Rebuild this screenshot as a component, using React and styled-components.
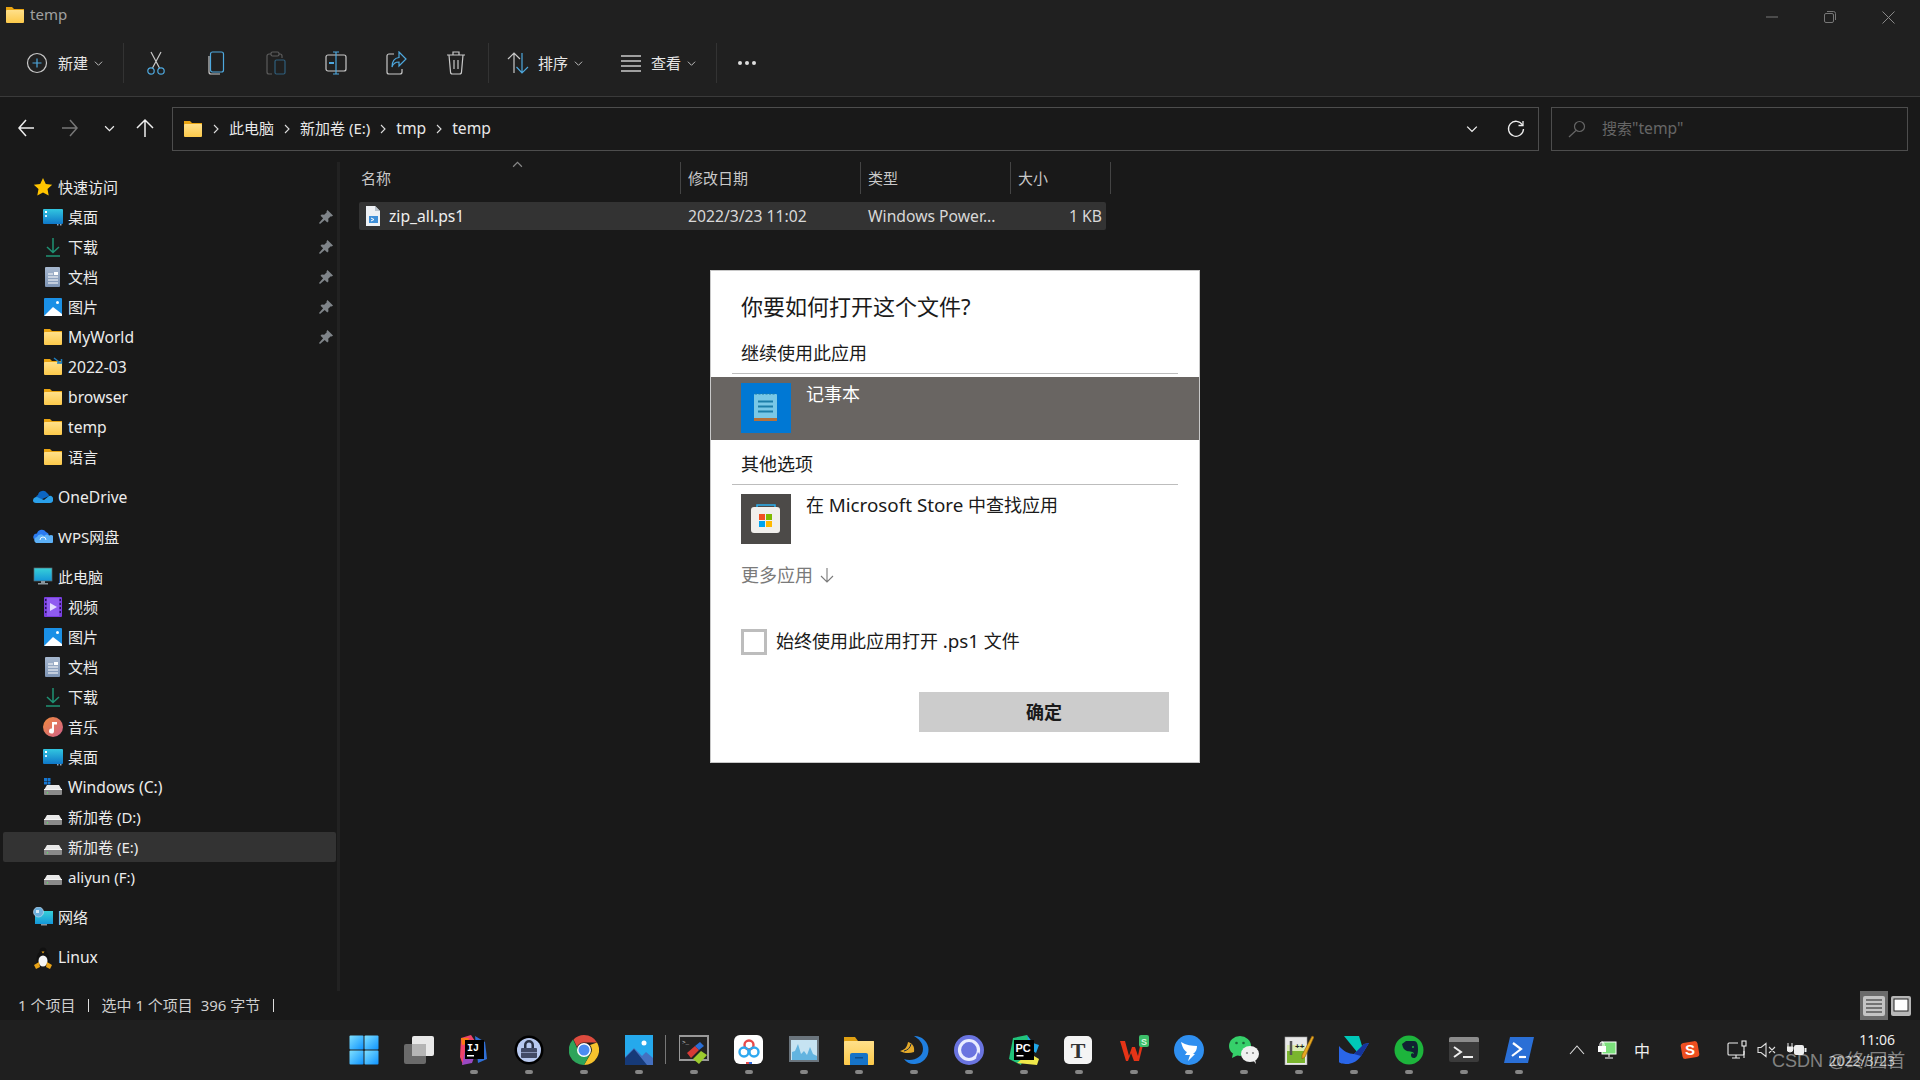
import styled, { createGlobalStyle } from 'styled-components';

const GlobalStyle = createGlobalStyle`
	html, body {
		margin: 0;
		padding: 0;
		background: #191919;
	}
	* {
		box-sizing: border-box;
	}
	body {
		font-family: 'Noto Sans', 'Noto Sans CJK SC', sans-serif;
		overflow: hidden;
	}
`;

/* ---------- small glyphs ---------- */

const Chevron = ({ size = 10, color = '#bbb', up }) => (
	<svg width={size} height={size} viewBox='0 0 10 10' fill='none' stroke={color} strokeWidth='1.1'>
		<path d={up ? 'M1 7l4-4 4 4' : 'M1 3l4 4 4-4'} />
	</svg>
);

const CrumbArrow = () => (
	<svg width='6' height='10' viewBox='0 0 6 10' fill='none' stroke='#ddd' strokeWidth='1.1'>
		<path d='M1 1l4 4-4 4' />
	</svg>
);

const Folder = ({ size = 20 }) => (
	<svg width={size} height={size} viewBox='0 0 20 20'>
		<path d='M1 2h6l2 2h10v3H1z' fill='#e9a412' />
		<rect x='1' y='5' width='18' height='13' rx='1' fill='url(#folderFill)' />
	</svg>
);

/* ---------- toolbar icons ---------- */

const BLUE = '#4ea8de';
const GREY = '#c9c9c9';

const NewIcon = () => (
	<svg width='22' height='22' viewBox='0 0 22 22' fill='none'>
		<circle cx='11' cy='11' r='9.5' stroke={GREY} strokeWidth='1.2' />
		<path d='M11 6.5v9M6.5 11h9' stroke={BLUE} strokeWidth='1.2' />
	</svg>
);
const CutIcon = () => (
	<svg width='22' height='24' viewBox='0 0 22 24' fill='none' strokeWidth='1.2'>
		<path d='M6 1l8.5 16M16 1L7.5 17' stroke={GREY} />
		<circle cx='6' cy='20' r='3.2' stroke={BLUE} />
		<circle cx='16' cy='20' r='3.2' stroke={BLUE} />
	</svg>
);
const CopyIcon = () => (
	<svg width='18' height='24' viewBox='0 0 18 24' fill='none' strokeWidth='1.2'>
		<path d='M2 5v16a2 2 0 0 0 2 2h9' stroke={GREY} />
		<rect x='3.5' y='1' width='13' height='20' rx='2' stroke={BLUE} />
	</svg>
);
const PasteIcon = () => (
	<svg width='20' height='24' viewBox='0 0 20 24' fill='none' strokeWidth='1.2'>
		<path d='M5 3H3a2 2 0 0 0-2 2v16a2 2 0 0 0 2 2h3M13 3h1a2 2 0 0 1 2 2v2' stroke='#5c5c5c' />
		<rect x='5' y='1' width='8' height='4' rx='1.5' stroke='#5c5c5c' />
		<rect x='9' y='9' width='10' height='14' rx='1.5' stroke='#2f5f7d' />
	</svg>
);
const RenameIcon = () => (
	<svg width='22' height='24' viewBox='0 0 22 24' fill='none' strokeWidth='1.2'>
		<rect x='1' y='4' width='20' height='16' rx='2' stroke={GREY} />
		<path d='M11 1v22M8 1h6M8 23h6' stroke={BLUE} />
		<path d='M4 12h5' stroke={BLUE} strokeWidth='2' />
	</svg>
);
const ShareIcon = () => (
	<svg width='22' height='24' viewBox='0 0 22 24' fill='none' strokeWidth='1.2'>
		<path d='M9 3H4a2 2 0 0 0-2 2v16a2 2 0 0 0 2 2h11a2 2 0 0 0 2-2v-3' stroke={GREY} />
		<path d='M14 1l7 7-7 7v-4c-4 0-6 2-7 5 0-6 3-9 7-9.500z' stroke={BLUE} />
	</svg>
);
const TrashIcon = () => (
	<svg width='20' height='24' viewBox='0 0 20 24' fill='none' stroke={GREY} strokeWidth='1.2'>
		<path d='M1 4h18M7 4V1h6v3M3 4l1.500 17a2 2 0 0 0 2 2h7a2 2 0 0 0 2-2L17 4M8 9v9M12 9v9' />
	</svg>
);
const SortIcon = () => (
	<svg width='22' height='24' viewBox='0 0 22 24' fill='none' strokeWidth='1.2'>
		<path d='M7 22V2M1 8l6-6 6 6' stroke={GREY} />
		<path d='M15 2v20M9.500 16l5.500 6 6-6' stroke={BLUE} />
	</svg>
);
const ViewIcon = () => (
	<svg width='20' height='20' viewBox='0 0 20 20' stroke={GREY} strokeWidth='1.3'>
		<path d='M0 3h20M0 8h20M0 13h20M0 18h20' />
	</svg>
);
const MoreIcon = () => (
	<svg width='20' height='6' viewBox='0 0 20 6' fill='#ddd'>
		<circle cx='3' cy='3' r='2' />
		<circle cx='10' cy='3' r='2' />
		<circle cx='17' cy='3' r='2' />
	</svg>
);
const NavArrow = ({ dir = 'left', color = '#eee' }) => {
	const d = {
		left: 'M17 10H2M9 2l-7 8 7 8',
		right: 'M1 10h15M9 2l7 8-7 8',
		up: 'M10 19V2M2 10l8-8 8 8',
	}[dir];
	return (
		<svg width='20' height='20' viewBox='0 0 20 20' fill='none' stroke={color} strokeWidth='1.5'>
			<path d={d} />
		</svg>
	);
};

/* ---------- sidebar icons ---------- */

const StarIcon = () => (
	<svg width='20' height='20' viewBox='0 0 20 20'>
		<path d='M10 1l2.800 5.900 6.400.8-4.700 4.400 1.200 6.400L10 15.400l-5.700 3.100 1.200-6.400L.8 7.700l6.400-.8z' fill='#ffc400' />
	</svg>
);
const DesktopIcon = () => (
	<svg width='20' height='20' viewBox='0 0 20 20'>
		<rect y='2' width='20' height='15' rx='1' fill='url(#deskFill)' />
		<rect x='2' y='4' width='2' height='2' fill='#fff' />
		<rect x='2' y='8' width='2' height='2' fill='#cfefff' />
		<rect x='14' y='17' width='1.500' height='1.500' fill='#9ab' />
		<rect x='17' y='17' width='1.500' height='1.500' fill='#9ab' />
	</svg>
);
const DownloadIcon = () => (
	<svg width='20' height='20' viewBox='0 0 20 20' fill='none' stroke='#1f9274' strokeWidth='1.5'>
		<path d='M10 1v14M4 10l6 5.500 6-5.500M3 19h14' />
	</svg>
);
const DocIcon = () => (
	<svg width='20' height='20' viewBox='0 0 20 20'>
		<rect x='2' width='15' height='20' rx='1' fill='url(#docFill)' />
		<path d='M5 7h5M5 10h10M5 13h10M5 16h10' stroke='#fff' strokeWidth='1' />
		<rect x='11' y='5' width='4' height='3' fill='#fff' />
	</svg>
);
const PictureIcon = () => (
	<svg width='20' height='20' viewBox='0 0 20 20'>
		<rect x='1' y='1' width='18' height='18' rx='1' fill='#1a90e6' />
		<path d='M1 19l9-9 9 7v2z' fill='#fff' />
		<circle cx='14.500' cy='5.500' r='1.500' fill='#fff' />
	</svg>
);
const ShortcutFolder = () => (
	<svg width='20' height='20' viewBox='0 0 20 20'>
		<path d='M1 2h6l2 2h10v3H1z' fill='#e9a412' />
		<rect x='1' y='5' width='18' height='13' rx='1' fill='url(#folderFill)' />
		<path d='M11 1l7 5.500M14 6h4.500V2' stroke='#1f7fc1' strokeWidth='1.500' fill='none' />
	</svg>
);
const OneDriveIcon = () => (
	<svg width='20' height='20' viewBox='0 0 20 20'>
		<path d='M5 8a5 5 0 0 1 9-2 4 4 0 0 1 2 3L7 13 3 10a3 3 0 0 1 2-2z' fill='#0c66c2' />
		<path d='M0 13.500A3.500 3.500 0 0 1 6 11l5 2 5-4a3.500 3.500 0 0 1 4 5c-.5 1-1.500 2-3 2H3c-2 0-3-1-3-2.500z' fill='#2aa0ea' />
	</svg>
);
const WpsCloudIcon = () => (
	<svg width='20' height='20' viewBox='0 0 20 20'>
		<path d='M2 13a3.500 3.500 0 0 1 2-6.500 5 5 0 0 1 9-1.500 4 4 0 0 1 3 3.500L6 15z' fill='#2b7bf0' />
		<path d='M3 16a3.200 3.200 0 0 1 1-6 4 4 0 0 1 7-1 3.500 3.500 0 0 1 5-.5 3.800 3.800 0 0 1 3 7.500H3z' fill='#5cb0f6' />
		<path d='M7 13a3 3 0 0 1 6 0' stroke='#e8f4ff' fill='none' />
	</svg>
);
const PcIcon = () => (
	<svg width='20' height='20' viewBox='0 0 20 20'>
		<rect x='1' y='1' width='18' height='13' fill='url(#pcFill)' stroke='#5a6a72' strokeWidth='.7' />
		<path d='M8 14h4v2H8zM5 16h10v1.500H5z' fill='#8a959c' />
	</svg>
);
const VideoIcon = () => (
	<svg width='20' height='20' viewBox='0 0 20 20'>
		<rect x='1' y='0' width='18' height='20' rx='1' fill='#7a3fe0' />
		<rect x='4' y='1' width='12' height='18' fill='#8f5bf0' />
		<path d='M2 2h1.500v2H2zM2 6h1.500v2H2zM2 10h1.500v2H2zM2 14h1.500v2H2zM16.500 2H18v2h-1.500zM16.500 6H18v2h-1.500zM16.500 10H18v2h-1.500zM16.500 14H18v2h-1.500z' fill='#2a1360' />
		<path d='M7 6l7 4-7 4z' fill='#e4dcff' />
	</svg>
);
const MusicIcon = () => (
	<svg width='20' height='20' viewBox='0 0 20 20'>
		<circle cx='10' cy='10' r='10' fill='url(#musicFill)' />
		<path d='M9 5h5v2.500h-3v6.500a2.500 2.500 0 1 1-2-2.400z' fill='#fff' />
	</svg>
);
const DriveIcon = ({ windows }) => (
	<svg width='20' height='20' viewBox='0 0 20 20'>
		<path d='M1 13l3-5h12l3 5z' fill='#e8e8e8' />
		<rect x='1' y='12' width='18' height='6' rx='1' fill='#8a8a8a' />
		<rect x='1' y='12' width='18' height='1' fill='#f4f4f4' />
		<rect x='4' y='15' width='1' height='1.500' fill='#5fdc6a' />
		{windows && <path d='M1 1h3v3H1zM4.500 1h3v3h-3zM1 4.500h3v3H1zM4.500 4.500h3v3h-3z' fill='#1677d2' />}
	</svg>
);
const NetworkIcon = () => (
	<svg width='20' height='20' viewBox='0 0 20 20'>
		<rect x='2' y='4' width='18' height='13' fill='url(#pcFill)' />
		<path d='M8 17h6v1.500H8z' fill='#8a959c' />
		<circle cx='5.500' cy='5' r='5' fill='#6aaedc' stroke='#cde' strokeWidth='.6' />
		<path d='M3 3h3v3H3z' fill='#d4e8f5' />
	</svg>
);
const LinuxIcon = () => (
	<svg width='20' height='22' viewBox='0 0 20 22'>
		<ellipse cx='10' cy='12' rx='6.500' ry='8' fill='#111' />
		<ellipse cx='10' cy='14' rx='4.500' ry='5.500' fill='#f5f5f5' />
		<circle cx='10' cy='4' r='3.500' fill='#111' />
		<path d='M8.500 4.500h3l-1.500 2z' fill='#e8a317' />
		<path d='M1 18l5-3 1 5-4 2zM19 18l-5-3-1 5 4 2z' fill='#e8a317' />
	</svg>
);
const PinIcon = () => (
	<svg width='14' height='14' viewBox='0 0 14 14' fill='#7f8489'>
		<path d='M8.500 0L14 5.500l-1.200 1-1-.3-2.600 2.600.3 2.500-1.200 1.200-2.600-2.600L1 14l-1-1 4.100-4.700L1.500 5.700l1.200-1.200 2.500.3 2.600-2.600-.3-1z' />
	</svg>
);

/* ---------- dialog icons ---------- */

const NotepadTile = () => (
	<svg width='50' height='50' viewBox='0 0 50 50'>
		<rect width='50' height='50' fill='#0078d4' />
		<rect x='13' y='11' width='23' height='27' rx='1' fill='#79c8e6' />
		<rect x='13' y='35' width='23' height='3' fill='#b5713a' />
		<path d='M17 18.500h15M17 23.500h15M17 28.500h15' stroke='#1c7ea8' strokeWidth='1.800' />
		<path d='M14 11h21' stroke='#1c7ea8' strokeWidth='1.200' strokeDasharray='2 1.500' />
	</svg>
);
const StoreTile = () => (
	<svg width='50' height='50' viewBox='0 0 50 50'>
		<rect width='50' height='50' fill='#4c4a48' />
		<path d='M16 14v-3h18v3' fill='none' stroke='#2bb0ee' strokeWidth='1.500' />
		<rect x='10' y='13' width='29' height='26' rx='3' fill='#f1efec' />
		<rect x='18' y='20' width='6' height='6' fill='#f25022' />
		<rect x='25' y='20' width='6' height='6' fill='#7fba00' />
		<rect x='18' y='27' width='6' height='6' fill='#00a4ef' />
		<rect x='25' y='27' width='6' height='6' fill='#ffb900' />
	</svg>
);

/* ---------- taskbar logos, all 30x30 ---------- */

const Logo = ({ children }) => (
	<svg width='30' height='30' viewBox='0 0 30 30'>
		{children}
	</svg>
);
const logos = {
	start: (
		<>
			<rect x='.5' y='.5' width='14' height='14' rx='1' fill='url(#winFill)' />
			<rect x='15.500' y='.5' width='14' height='14' rx='1' fill='url(#winFill)' />
			<rect x='.5' y='15.500' width='14' height='14' rx='1' fill='url(#winFill)' />
			<rect x='15.500' y='15.500' width='14' height='14' rx='1' fill='url(#winFill)' />
		</>
	),
	taskview: (
		<>
			<rect x='8' y='1' width='22' height='20' rx='2' fill='#e9e9e9' />
			<rect x='0' y='9' width='22' height='20' rx='2' fill='#6a6a6a' />
			<rect x='8' y='9' width='14' height='12' fill='#b5b5b5' />
		</>
	),
	idea: (
		<>
			<path d='M2 3l10-3 4 6-12 24-3-8z' fill='#f0436a' />
			<path d='M2 3l8 0-2 6-5 1z' fill='#f97a12' />
			<path d='M16 1l10 6 2 17-9 4z' fill='#2f6fd6' />
			<path d='M3 30l3-14 10 4-3 8z' fill='#9a48c2' />
			<rect x='6' y='5' width='19' height='19' fill='#000' />
			<text x='8' y='16' fontSize='10' fontWeight='700' fill='#fff' fontFamily='Liberation Mono'>IJ</text>
			<rect x='8' y='20' width='7' height='1.500' fill='#fff' />
		</>
	),
	keepass: (
		<>
			<circle cx='15' cy='15' r='14.500' fill='#000' />
			<circle cx='15' cy='15' r='12' fill='#b7c8ef' />
			<path d='M10 13v-3a5 5 0 0 1 10 0v3h-2.500v-3a2.500 2.500 0 0 0-5 0v3z' fill='#2a3145' />
			<rect x='7' y='13' width='16' height='10' rx='1' fill='#424a66' />
			<rect x='7' y='17' width='16' height='1' fill='#8792b5' />
		</>
	),
	chrome: (
		<>
			<path d='M15 0a15 15 0 0 1 13 7.500H15A7.500 7.500 0 0 0 8 12L4.500 4.500A15 15 0 0 1 15 0z' fill='#dd4b3e' />
			<path d='M28 7.500A15 15 0 0 1 15 30l6.500-11A7.500 7.500 0 0 0 21 10z' fill='#f6c22d' />
			<path d='M15 30A15 15 0 0 1 4 4.500L9 15a7 7 0 0 0 12 4z' fill='#2da45a' />
			<circle cx='15' cy='15' r='7' fill='#fff' />
			<circle cx='15' cy='15' r='5.500' fill='#4c8cf0' />
		</>
	),
	photos: (
		<>
			<rect x='1' y='0' width='28' height='30' fill='#25a9ec' />
			<circle cx='20' cy='8' r='2.500' fill='#fff' />
			<path d='M1 30V22l9-9 8 8 4-4 7 6v7z' fill='#4470c0' />
			<path d='M1 30v-7l9-9 13 16z' fill='#163a78' />
		</>
	),
	blocks: (
		<>
			<rect x='0' y='1' width='29' height='24' fill='#222' stroke='#999' strokeWidth='2' />
			<text x='3' y='9' fontSize='6' fill='#ddd' fontFamily='Liberation Mono'>{'>_'}</text>
			<path d='M8 18l8-7 4 4-8 8z' fill='#d83a36' />
			<path d='M16 11l5-4 4 4-5 4z' fill='#2a6fd6' />
			<path d='M14 24l8-8 6 4-8 9z' fill='#9ccb2e' />
		</>
	),
	baidu: (
		<>
			<rect x='0' y='0' width='29' height='29' rx='6' fill='#fff' />
			<circle cx='15' cy='10' r='4.500' fill='none' stroke='#e84a4a' strokeWidth='2.400' />
			<circle cx='10' cy='17' r='4.500' fill='none' stroke='#2ea8ef' strokeWidth='2.400' />
			<circle cx='20' cy='17' r='4.500' fill='none' stroke='#2ea8ef' strokeWidth='2.400' />
			<rect x='12' y='27' width='3' height='2' fill='#e84a4a' />
			<rect x='15' y='27' width='3' height='2' fill='#2e6cdf' />
		</>
	),
	monitor: (
		<>
			<rect x='0' y='1' width='30' height='26' fill='#6a747c' />
			<rect x='2' y='5' width='26' height='20' fill='#c6e3f2' />
			<path d='M3 25V17l3-1 3-7 3 10 3-3 3 4 3-8 3 7 4 2v4z' fill='#63b4e0' />
		</>
	),
	explorer: (
		<>
			<path d='M0 2h11l3 4h16v3H0z' fill='#e0a012' />
			<rect x='0' y='6' width='30' height='24' rx='1' fill='url(#folderFill)' />
			<path d='M6 30V20a2 2 0 0 1 2-2h14a2 2 0 0 1 2 2v10z' fill='#1673c7' />
			<rect x='11' y='22' width='8' height='1.500' fill='#0f4f8a' />
		</>
	),
	bird: (
		<>
			<path d='M15 1a14 14 0 0 1 1 28 12 12 0 0 1-11-5c8 3 19-1 19-10 0-6-4-10-9-13z' fill='#1f7fe0' />
			<path d='M9 7c4 1 7 4 6 10-5 2-11 1-14-1 4-1 7-3 8-9z' fill='#e3a92a' />
			<path d='M12 9c-1 4-3 6-7 7' stroke='#1b2a40' fill='none' />
		</>
	),
	loop: (
		<>
			<circle cx='15' cy='15' r='15' fill='#6a74e0' />
			<circle cx='15' cy='15' r='9.500' fill='none' stroke='#e8ecff' strokeWidth='3.200' />
			<path d='M22 23l5-1-3-5z' fill='#6a74e0' />
		</>
	),
	pycharm: (
		<>
			<path d='M4 3l14-3 2 5-8 25-12-6z' fill='#21c37a' />
			<path d='M18 0l6 8 6 2-3 8-6-4z' fill='#20a7e8' />
			<path d='M8 28l12-10 10 6-2 6z' fill='#f0e84a' />
			<rect x='5' y='5' width='20' height='20' fill='#000' />
			<text x='6.500' y='16.500' fontSize='11' fontWeight='700' fill='#fff' fontFamily='Liberation Sans'>PC</text>
			<rect x='7.500' y='20' width='7' height='1.500' fill='#fff' />
		</>
	),
	typora: (
		<>
			<rect x='0' y='1' width='28' height='28' rx='5' fill='#f4f4f4' />
			<text x='14' y='23' textAnchor='middle' fontSize='22' fontWeight='700' fill='#333' fontFamily='Liberation Serif'>T</text>
		</>
	),
	wps: (
		<>
			<path d='M1 6h5l4 15 3-9h3l3 9 3-15h3l-5 20h-5l-3-8-3 8H7z' fill='#e63417' />
			<rect x='20' y='0' width='10' height='12' rx='2' fill='#3dbf6a' />
			<text x='25' y='9.500' textAnchor='middle' fontSize='9' fontWeight='700' fill='#d8f5df' fontFamily='Liberation Sans'>S</text>
		</>
	),
	ding: (
		<>
			<ellipse cx='15' cy='15' rx='15' ry='15' fill='#2f8ff0' />
			<path d='M7 7c5 3 11 4 16 4 0 3-1 6-4 8l2 0-7 7 2-6H11l2-3c-3-1-5-6-6-10z' fill='#fff' />
		</>
	),
	wechat: (
		<>
			<ellipse cx='11' cy='11' rx='11' ry='10' fill='#36d06a' />
			<path d='M4 18l-1 5 6-3z' fill='#36d06a' />
			<circle cx='7.500' cy='8' r='1.300' fill='#1a6d3a' />
			<circle cx='14.500' cy='8' r='1.300' fill='#1a6d3a' />
			<ellipse cx='21' cy='19' rx='9' ry='8' fill='#f0f0f0' />
			<path d='M24 25l3 4-1-5z' fill='#f0f0f0' />
			<circle cx='18' cy='18' r='1.100' fill='#888' />
			<circle cx='24' cy='18' r='1.100' fill='#888' />
		</>
	),
	notepadpp: (
		<>
			<rect x='1' y='2' width='22' height='28' fill='#e8e8e8' stroke='#999' strokeWidth='.6' />
			<path d='M3 16h18v12H3z' fill='#7ab52e' />
			<path d='M3 10h18v6H3z' fill='#dcecb4' />
			<path d='M7 6v14' stroke='#555' strokeWidth='2.500' />
			<text x='11' y='14' fontSize='8' fontWeight='700' fill='#222' fontFamily='Liberation Sans'>++</text>
			<path d='M28 1l2 1-9 20-3 2 0-4z' fill='#e6a820' stroke='#8a5b10' strokeWidth='.6' />
		</>
	),
	feishu: (
		<>
			<path d='M5 1h15l4 13-6 3z' fill='#00c8b8' />
			<path d='M0 11c4 5 10 8 15 8l10-10 5-1-8 13c-4 6-10 8-14 8-4 0-8-1-8-2z' fill='#2a66e8' />
			<path d='M15 19l10-10 5-1-8 13z' fill='#14359c' />
		</>
	),
	evernote: (
		<>
			<circle cx='15' cy='15' r='14.500' fill='#1db43c' />
			<path d='M8 9l4-3h8c3 0 4 3 4 8 0 7-2 9-4 9s-3-1-3-3 2-2 3-1c0-3-5-2-7-3-3-1-4-3-5-7z' fill='#123' />
			<circle cx='19' cy='12' r='1' fill='#1db43c' />
		</>
	),
	terminal: (
		<>
			<rect x='0' y='2' width='30' height='25' rx='2' fill='#3b3b3b' />
			<path d='M0 4a2 2 0 0 1 2-2h26a2 2 0 0 1 2 2v3H0z' fill='#8c8c8c' />
			<path d='M5 12l7 5-7 5' fill='none' stroke='#eee' strokeWidth='2' />
			<path d='M14 22h10' stroke='#eee' strokeWidth='2' />
		</>
	),
	powershell: (
		<>
			<path d='M6 2h24l-6 26H0z' fill='#2a6fd6' />
			<path d='M9 8l8 6-9 7' fill='none' stroke='#fff' strokeWidth='2.200' />
			<path d='M15 22h7' stroke='#fff' strokeWidth='2.200' />
		</>
	),
};

const Gradients = () => (
	<HiddenDefs>
		<defs>
			<linearGradient id='folderFill' x1='0' y1='0' x2='0' y2='1'>
				<stop offset='0' stopColor='#ffe08a' />
				<stop offset='1' stopColor='#fcc94a' />
			</linearGradient>
			<linearGradient id='deskFill' x1='0' y1='0' x2='0' y2='1'>
				<stop offset='0' stopColor='#32c6e0' />
				<stop offset='1' stopColor='#0f78c9' />
			</linearGradient>
			<linearGradient id='docFill' x1='0' y1='0' x2='0' y2='1'>
				<stop offset='0' stopColor='#a7b8cf' />
				<stop offset='1' stopColor='#7c93b3' />
			</linearGradient>
			<linearGradient id='pcFill' x1='0' y1='0' x2='0' y2='1'>
				<stop offset='0' stopColor='#38d0d8' />
				<stop offset='1' stopColor='#1497d9' />
			</linearGradient>
			<linearGradient id='musicFill' x1='0' y1='0' x2='1' y2='1'>
				<stop offset='0' stopColor='#f08a3c' />
				<stop offset='1' stopColor='#d0608a' />
			</linearGradient>
			<linearGradient id='winFill' x1='0' y1='0' x2='1' y2='1'>
				<stop offset='0' stopColor='#7fe0ff' />
				<stop offset='1' stopColor='#0e93ff' />
			</linearGradient>
		</defs>
	</HiddenDefs>
);

/* ---------- data ---------- */

const sideGroups = [
	[
		{ label: '快速访问', icon: <StarIcon /> },
		{ label: '桌面', icon: <DesktopIcon />, child: true, pin: true },
		{ label: '下载', icon: <DownloadIcon />, child: true, pin: true },
		{ label: '文档', icon: <DocIcon />, child: true, pin: true },
		{ label: '图片', icon: <PictureIcon />, child: true, pin: true },
		{ label: 'MyWorld', icon: <Folder />, child: true, pin: true },
		{ label: '2022-03', icon: <ShortcutFolder />, child: true },
		{ label: 'browser', icon: <Folder />, child: true },
		{ label: 'temp', icon: <Folder />, child: true },
		{ label: '语言', icon: <Folder />, child: true },
	],
	[{ label: 'OneDrive', icon: <OneDriveIcon /> }],
	[{ label: 'WPS网盘', icon: <WpsCloudIcon /> }],
	[
		{ label: '此电脑', icon: <PcIcon /> },
		{ label: '视频', icon: <VideoIcon />, child: true },
		{ label: '图片', icon: <PictureIcon />, child: true },
		{ label: '文档', icon: <DocIcon />, child: true },
		{ label: '下载', icon: <DownloadIcon />, child: true },
		{ label: '音乐', icon: <MusicIcon />, child: true },
		{ label: '桌面', icon: <DesktopIcon />, child: true },
		{ label: 'Windows (C:)', icon: <DriveIcon windows />, child: true },
		{ label: '新加卷 (D:)', icon: <DriveIcon />, child: true },
		{ label: '新加卷 (E:)', icon: <DriveIcon />, child: true, selected: true },
		{ label: 'aliyun (F:)', icon: <DriveIcon />, child: true },
	],
	[{ label: '网络', icon: <NetworkIcon /> }],
	[{ label: 'Linux', icon: <LinuxIcon /> }],
];

const toolIcons = [
	<CutIcon key='cut' />,
	<CopyIcon key='copy' />,
	<PasteIcon key='paste' />,
	<RenameIcon key='rename' />,
	<ShareIcon key='share' />,
	<TrashIcon key='trash' />,
];

const pinned = [
	{ name: 'start' },
	{ name: 'taskview' },
	{ name: 'idea', on: true },
	{ name: 'keepass', on: true },
	{ name: 'chrome', on: true },
	{ name: 'photos', on: true, divider: true },
	{ name: 'blocks', on: true },
	{ name: 'baidu', on: true },
	{ name: 'monitor', on: true },
	{ name: 'explorer', on: true },
	{ name: 'bird', on: true },
	{ name: 'loop', on: true },
	{ name: 'pycharm', on: true },
	{ name: 'typora', on: true },
	{ name: 'wps', on: true },
	{ name: 'ding', on: true },
	{ name: 'wechat', on: true },
	{ name: 'notepadpp', on: true },
	{ name: 'feishu', on: true },
	{ name: 'evernote', on: true },
	{ name: 'terminal', on: true },
	{ name: 'powershell', on: true },
];

const isLatin = (text) => /^[\x20-\x7e]+$/.test(text);

/* ---------- page ---------- */

const App = () => {
	return (
		<Page>
			<GlobalStyle />
			<Gradients />

			<TitleBar>
				<Folder size={20} />
				<WindowTitle>temp</WindowTitle>
				<WindowControls>
					<WindowButton>
						<svg width='12' height='12' viewBox='0 0 12 12' stroke='#777'>
							<path d='M0 6h12' />
						</svg>
					</WindowButton>
					<WindowButton>
						<svg width='12' height='12' viewBox='0 0 12 12' fill='none' stroke='#777'>
							<rect x='.5' y='2.500' width='9' height='9' rx='1.500' />
							<path d='M3 .5h6.500a2 2 0 0 1 2 2V9' />
						</svg>
					</WindowButton>
					<WindowButton>
						<svg width='13' height='13' viewBox='0 0 13 13' stroke='#888'>
							<path d='M.5.5l12 12M12.500.5l-12 12' />
						</svg>
					</WindowButton>
				</WindowControls>
			</TitleBar>

			<Toolbar>
				<ToolGroup $width={97}>
					<NewIcon />
					<ToolLabel $gap={10}>新建</ToolLabel>
					<ToolCaret>
						<Chevron size={9} />
					</ToolCaret>
				</ToolGroup>
				<ToolSeparator />
				<ToolIcons>
					{toolIcons.map((icon) => (
						<ToolSlot key={icon.key}>{icon}</ToolSlot>
					))}
				</ToolIcons>
				<ToolSeparator />
				<ToolGroup $width={112} $inset={18}>
					<SortIcon />
					<ToolLabel $gap={9}>排序</ToolLabel>
					<ToolCaret>
						<Chevron size={9} />
					</ToolCaret>
				</ToolGroup>
				<ToolGroup $width={115} $inset={20}>
					<ViewIcon />
					<ToolLabel $gap={10}>查看</ToolLabel>
					<ToolCaret>
						<Chevron size={9} />
					</ToolCaret>
				</ToolGroup>
				<ToolSeparator />
				<ToolSlot>
					<MoreIcon />
				</ToolSlot>
			</Toolbar>

			<AddressRow>
				<NavButton $width={44}>
					<NavArrow dir='left' />
				</NavButton>
				<NavButton $width={44}>
					<NavArrow dir='right' color='#777' />
				</NavButton>
				<NavButton $width={32}>
					<Chevron size={11} color='#eee' />
				</NavButton>
				<NavButton $width={40}>
					<NavArrow dir='up' />
				</NavButton>
				<AddressBox>
					<Folder size={20} />
					<CrumbArrow />
					<Crumb>此电脑</Crumb>
					<CrumbArrow />
					<Crumb>新加卷 (E:)</Crumb>
					<CrumbArrow />
					<Crumb>
						<Latin>tmp</Latin>
					</Crumb>
					<CrumbArrow />
					<Crumb>
						<Latin>temp</Latin>
					</Crumb>
					<AddressTools>
						<NavButton $width={44}>
							<Chevron size={12} color='#eee' />
						</NavButton>
						<NavButton $width={44}>
							<svg width='18' height='18' viewBox='0 0 18 18' fill='none' stroke='#eee' strokeWidth='1.300'>
								<path d='M15.500 5A7.500 7.500 0 1 0 16.500 9' />
								<path d='M16 1v4.500h-4.500' />
							</svg>
						</NavButton>
					</AddressTools>
				</AddressBox>
				<SearchBox>
					<svg width='18' height='18' viewBox='0 0 18 18' fill='none' stroke='#666' strokeWidth='1.200'>
						<circle cx='11.500' cy='6.500' r='5' />
						<path d='M8 10.500L1 17' />
					</svg>
					<SearchHint>
						搜索<Latin>"temp"</Latin>
					</SearchHint>
				</SearchBox>
			</AddressRow>

			<Body>
				<Sidebar>
					{sideGroups.map((group, i) => (
						<SideGroup key={i}>
							{group.map((item) => (
								<SideRow key={item.label} $child={item.child} $selected={item.selected}>
									<SideIcon>{item.icon}</SideIcon>
									<SideLabel>{isLatin(item.label) && !item.label.includes('(F') ? <Latin>{item.label}</Latin> : item.label}</SideLabel>
									{item.pin && (
										<SidePin>
											<PinIcon />
										</SidePin>
									)}
								</SideRow>
							))}
						</SideGroup>
					))}
				</Sidebar>

				<FileArea>
					<HeaderRow>
						<HeaderCell $width={341} $inset={21}>
							名称
							<SortCaret>
								<Chevron size={11} color='#888' up />
							</SortCaret>
						</HeaderCell>
						<HeaderCell $width={180}>修改日期</HeaderCell>
						<HeaderCell $width={150}>类型</HeaderCell>
						<HeaderCell $width={100}>大小</HeaderCell>
					</HeaderRow>
					<FileRow>
						<FileName>
							<svg width='16' height='20' viewBox='0 0 16 20'>
								<path d='M1 0h9l5 5v15H1z' fill='#eef1f5' />
								<path d='M10 0l5 5h-5z' fill='#b8c2cc' />
								<rect x='4' y='10' width='9' height='7' fill='#3f8fd8' />
								<path d='M6 12l3 1.500L6 15' stroke='#fff' fill='none' />
							</svg>
							<span>zip_all.ps1</span>
						</FileName>
						<FileCell $width={180}>2022/3/23 11:02</FileCell>
						<FileCell $width={150}>Windows Power...</FileCell>
						<FileSize>1 KB</FileSize>
					</FileRow>
				</FileArea>

				<Dialog>
					<DialogTitle>你要如何打开这个文件?</DialogTitle>
					<SectionLabel>继续使用此应用</SectionLabel>
					<AppRow $active>
						<NotepadTile />
						<AppName>记事本</AppName>
					</AppRow>
					<SectionLabel $tight>其他选项</SectionLabel>
					<AppRow>
						<StoreTile />
						<AppName>
							在 <Latin>Microsoft Store</Latin> 中查找应用
						</AppName>
					</AppRow>
					<MoreApps>
						更多应用
						<svg width='14' height='16' viewBox='0 0 14 16' fill='none' stroke='#7a7a7a' strokeWidth='1.100'>
							<path d='M7 1v14M1 9l6 6 6-6' />
						</svg>
					</MoreApps>
					<CheckRow>
						<CheckBox />
						<CheckText>
							始终使用此应用打开 <Latin>.ps1</Latin> 文件
						</CheckText>
					</CheckRow>
					<ConfirmButton>确定</ConfirmButton>
				</Dialog>
			</Body>

			<StatusBar>
				<StatusText>1 个项目</StatusText>
				<StatusPipe />
				<StatusText>选中 1 个项目&nbsp;&nbsp;396 字节</StatusText>
				<StatusPipe />
				<ViewSwitch>
					<ViewButton $active>
						<svg width='22' height='20' viewBox='0 0 22 20'>
							<rect width='22' height='20' rx='2' fill='#c4c4c4' />
							<path d='M3 4h16M3 8h16M3 12h16M3 16h16' stroke='#222' />
						</svg>
					</ViewButton>
					<ViewButton>
						<svg width='20' height='20' viewBox='0 0 20 20'>
							<rect width='20' height='20' rx='2' fill='#b5b5b5' />
							<rect x='3' y='3' width='14' height='12' fill='#fff' stroke='#222' />
						</svg>
					</ViewButton>
				</ViewSwitch>
			</StatusBar>

			<Taskbar>
				{pinned.map((app) => (
					<TaskSlot key={app.name} $divider={app.divider}>
						<Logo>{logos[app.name]}</Logo>
						{app.on && <TaskDot />}
					</TaskSlot>
				))}
				<Tray>
					<TrayItem $width={30}>
						<svg width='16' height='10' viewBox='0 0 16 10' fill='none' stroke='#ddd' strokeWidth='1.100'>
							<path d='M1 9l7-8 7 8' />
						</svg>
					</TrayItem>
					<TrayItem $width={30}>
						<svg width='20' height='20' viewBox='0 0 20 20'>
							<rect x='5' y='2' width='14' height='12' fill='#7ce07c' stroke='#fff' />
							<rect x='1' y='6' width='8' height='6' fill='#fff' />
							<path d='M3 6V4a2 2 0 0 1 4 0v2' fill='none' stroke='#fff' />
							<path d='M12 14v3M8 18h8' stroke='#fff' />
						</svg>
					</TrayItem>
					<TrayItem $width={30} $gap={5}>
						<ImeText>中</ImeText>
					</TrayItem>
					<TrayItem $width={30} $gap={18}>
						<svg width='20' height='20' viewBox='0 0 20 20'>
							<rect x='1.500' y='2' width='17' height='16' rx='3' fill='#ee4f20' transform='rotate(-10 10 10)' />
							<text x='10' y='15' textAnchor='middle' fontSize='15' fontWeight='700' fill='#fff' fontFamily='Liberation Sans'>S</text>
						</svg>
					</TrayItem>
					<TrayItem $width={30} $gap={17}>
						<svg width='20' height='20' viewBox='0 0 20 20' fill='none' stroke='#eee' strokeWidth='1.100'>
							<path d='M11 3H2a1 1 0 0 0-1 1v10a1 1 0 0 0 1 1h14a1 1 0 0 0 1-1v-3M9 15v3M5 18h8' />
							<rect x='15' y='1' width='4' height='5' />
							<path d='M17 6v12' />
						</svg>
					</TrayItem>
					<TrayItem $width={30}>
						<svg width='20' height='16' viewBox='0 0 20 16' fill='none' stroke='#ddd' strokeWidth='1.100'>
							<path d='M1 5.500h3L9 1.500v13l-5-4H1zM12 5l6 6M18 5l-6 6' />
						</svg>
					</TrayItem>
					<TrayItem $width={30}>
						<svg width='20' height='16' viewBox='0 0 20 16' fill='#eee'>
							<path d='M1 1v4M5 1v4M0 5h6v2a3 3 0 0 1-6 0z' stroke='#eee' />
							<rect x='7' y='3' width='10' height='10' rx='2' />
							<rect x='17.500' y='6' width='2' height='4' />
						</svg>
					</TrayItem>
					<Clock>
						<span>11:06</span>
						<ClockDate>2022/3/23</ClockDate>
					</Clock>
				</Tray>
				<Watermark>CSDN @终/回首</Watermark>
			</Taskbar>
		</Page>
	);
};

export default App;

const Page = styled.div`
	position: relative;
	width: 1920px;
	height: 1080px;
	display: flex;
	flex-direction: column;
	overflow: hidden;
	background: #191919;
	color: #e6e6e6;
	font-size: 15px;
`;

const HiddenDefs = styled.svg`
	position: absolute;
	width: 0;
	height: 0;
`;

// latin glyphs of Segoe run wider than Noto at the same size
const Latin = styled.span`
	font-size: 1.045em;
`;

const TitleBar = styled.div`
	height: 30px;
	display: flex;
	align-items: center;
	padding-left: 5px;
	background: #202020;
`;

const WindowTitle = styled.span`
	margin-left: 5px;
	padding-bottom: 2px;
	color: #a0a0a0;
	font-size: 15px;
	line-height: 20px;
`;

const WindowControls = styled.div`
	margin-left: auto;
	display: flex;
	padding: 4px 3px 0 0;
`;

const WindowButton = styled.div`
	width: 58px;
	height: 26px;
	display: flex;
	align-items: center;
	justify-content: center;
`;

const Toolbar = styled.div`
	height: 67px;
	display: flex;
	align-items: center;
	padding-left: 26px;
	background: #202020;
	border-bottom: 1px solid #3a3a3a;
`;

const ToolGroup = styled.div`
	width: ${(p) => p.$width}px;
	display: flex;
	align-items: center;
	padding-left: ${(p) => p.$inset || 0}px;
`;

const ToolLabel = styled.span`
	margin-left: ${(p) => p.$gap}px;
	font-size: 15px;
	line-height: 20px;
	color: #e6e6e6;
`;

const ToolCaret = styled.span`
	display: flex;
	margin-left: 6px;
`;

const ToolSeparator = styled.div`
	width: 1px;
	height: 40px;
	background: #333;
`;

const ToolIcons = styled.div`
	display: flex;
	margin: 0 2px;
`;

const ToolSlot = styled.div`
	width: 60px;
	height: 40px;
	display: flex;
	align-items: center;
	justify-content: center;
`;

const AddressRow = styled.div`
	height: 65px;
	display: flex;
	align-items: flex-start;
	padding: 10px 12px 0 5px;
	background: #191919;
`;

const NavButton = styled.div`
	width: ${(p) => p.$width}px;
	height: 42px;
	display: flex;
	align-items: center;
	justify-content: center;
`;

const AddressBox = styled.div`
	flex: 1;
	height: 44px;
	margin-left: 7px;
	display: flex;
	align-items: center;
	gap: 10px;
	padding-left: 10px;
	border: 1px solid #4d4d4d;
`;

const Crumb = styled.span`
	padding-bottom: 2px;
	font-size: 15px;
	line-height: 20px;
	color: #e8e8e8;
`;

const AddressTools = styled.div`
	margin-left: auto;
	display: flex;
`;

const SearchBox = styled.div`
	width: 357px;
	height: 44px;
	margin-left: 12px;
	display: flex;
	align-items: center;
	gap: 16px;
	padding-left: 16px;
	border: 1px solid #4d4d4d;
`;

const SearchHint = styled.span`
	padding-bottom: 2px;
	font-size: 15px;
	color: #666;
`;

const Body = styled.div`
	position: relative;
	flex: 1;
	display: flex;
	min-height: 0;
`;

const Sidebar = styled.nav`
	width: 340px;
	display: flex;
	flex-direction: column;
	gap: 10px;
	padding-top: 10px;
	border-right: 3px solid #222;
`;

const SideGroup = styled.div`
	display: flex;
	flex-direction: column;
`;

const SideRow = styled.div`
	width: 333px;
	height: 30px;
	margin-left: 3px;
	display: flex;
	align-items: center;
	gap: 5px;
	padding: 0 2px 0 ${(p) => (p.$child ? 40 : 30)}px;
	border-radius: 2px;
	background: ${(p) => (p.$selected ? '#333' : 'transparent')};
`;

const SideIcon = styled.span`
	width: 20px;
	height: 20px;
	display: flex;
	flex: none;
`;

const SideLabel = styled.span`
	padding-bottom: 1px;
	font-size: 15px;
	line-height: 20px;
	color: #ececec;
`;

const SidePin = styled.span`
	margin-left: auto;
	width: 16px;
	display: flex;
	justify-content: center;
`;

const FileArea = styled.section`
	flex: 1;
`;

const HeaderRow = styled.div`
	height: 32px;
	display: flex;
`;

const HeaderCell = styled.div`
	position: relative;
	width: ${(p) => p.$width}px;
	display: flex;
	align-items: center;
	padding-left: ${(p) => p.$inset || 7}px;
	padding-bottom: 2px;
	border-right: 1px solid #444;
	font-size: 15px;
	color: #c8c8c8;
`;

const SortCaret = styled.span`
	position: absolute;
	left: 172px;
	top: -3px;
	display: flex;
`;

const FileRow = styled.div`
	width: 747px;
	height: 28px;
	margin: 8px 0 0 19px;
	display: flex;
	align-items: center;
	border-radius: 2px;
	background: #333;
	font-size: 15.7px;
	color: #d8d8d8;
`;

const FileName = styled.div`
	width: 329px;
	display: flex;
	align-items: center;
	gap: 8px;
	padding-left: 6px;
	color: #eee;
`;

const FileCell = styled.div`
	width: ${(p) => p.$width}px;
`;

const FileSize = styled.div`
	flex: 1;
	padding-right: 4px;
	text-align: right;
`;

const Dialog = styled.div`
	position: absolute;
	left: 710px;
	top: 108px;
	width: 490px;
	height: 493px;
	display: flex;
	flex-direction: column;
	border: 1px solid #c8c8c8;
	background: #fff;
	color: #1a1a1a;
	font-size: 18px;
	line-height: 24px;
`;

const DialogTitle = styled.h1`
	margin: 20px 0 1px 30px;
	font-size: 22px;
	font-weight: 400;
	line-height: 30px;
`;

const SectionLabel = styled.div`
	margin: ${(p) => (p.$tight ? 12 : 19)}px 21px 0;
	padding: 0 0 8px 9px;
	border-bottom: 1px solid #bdbdbd;
`;

const AppRow = styled.div`
	height: 63px;
	margin-top: 3px;
	display: flex;
	align-items: flex-start;
	gap: 15px;
	padding: 6px 0 0 30px;
	background: ${(p) => (p.$active ? '#696562' : 'transparent')};
	color: ${(p) => (p.$active ? '#fff' : '#1a1a1a')};
`;

const AppName = styled.span`
	margin-top: -1px;
	line-height: 24px;
`;

const MoreApps = styled.div`
	margin: 12px 0 1px 30px;
	display: flex;
	align-items: center;
	gap: 7px;
	color: #7a7a7a;
`;

const CheckRow = styled.div`
	margin: 41px 0 0 30px;
	height: 26px;
	display: flex;
	align-items: center;
	gap: 9px;
`;

const CheckText = styled.span`
	padding-bottom: 2px;
`;

const CheckBox = styled.span`
	width: 26px;
	height: 26px;
	border: 3px solid #bdbdbd;
`;

const ConfirmButton = styled.div`
	width: 250px;
	height: 40px;
	margin: 37px 30px 0 auto;
	display: flex;
	align-items: center;
	justify-content: center;
	background: #ccc;
	font-weight: 700;
`;

const StatusBar = styled.footer`
	height: 29px;
	display: flex;
	align-items: center;
	padding-left: 18px;
	font-size: 15px;
	color: #cfcfcf;
`;

const StatusText = styled.span`
	padding-bottom: 2px;
`;

const StatusPipe = styled.i`
	width: 1px;
	height: 13px;
	margin: 0 12px 0 13px;
	background: #ddd;
`;

const ViewSwitch = styled.div`
	margin-left: auto;
	display: flex;
	gap: 3px;
	padding-right: 9px;
	align-self: stretch;
`;

const ViewButton = styled.div`
	width: ${(p) => (p.$active ? 28 : 20)}px;
	display: flex;
	align-items: center;
	justify-content: center;
	background: ${(p) => (p.$active ? '#6b6b6b' : 'transparent')};
`;

const Taskbar = styled.div`
	position: relative;
	height: 60px;
	display: flex;
	padding-left: 336px;
	background: #1f1f1f;
`;

const TaskSlot = styled.div`
	position: relative;
	width: 55px;
	display: flex;
	align-items: center;
	justify-content: center;

	${(p) =>
		p.$divider &&
		`&::after {
			content: '';
			position: absolute;
			right: 0;
			top: 15px;
			width: 1px;
			height: 29px;
			background: #777;
		}`}
`;

const TaskDot = styled.span`
	position: absolute;
	left: 24px;
	bottom: 6px;
	width: 8px;
	height: 4px;
	border-radius: 2px;
	background: #858585;
`;

const Tray = styled.div`
	margin-left: auto;
	display: flex;
	align-items: center;
`;

const TrayItem = styled.div`
	width: ${(p) => p.$width}px;
	margin-left: ${(p) => p.$gap || 0}px;
	display: flex;
	align-items: center;
	justify-content: center;
`;

const ImeText = styled.span`
	font-size: 16px;
	color: #eee;
`;

const Clock = styled.div`
	width: 108px;
	display: flex;
	flex-direction: column;
	align-items: flex-end;
	gap: 2px;
	padding-right: 25px;
	font-size: 14px;
	line-height: 19px;
	color: #eee;
`;

const ClockDate = styled.span`
	color: #bbb;
`;

const Watermark = styled.span`
	position: absolute;
	left: 1772px;
	top: 30px;
	font-family: 'Liberation Sans', 'Noto Sans CJK SC', sans-serif;
	font-size: 18px;
	line-height: 22px;
	color: rgba(255, 255, 255, 0.45);
`;
